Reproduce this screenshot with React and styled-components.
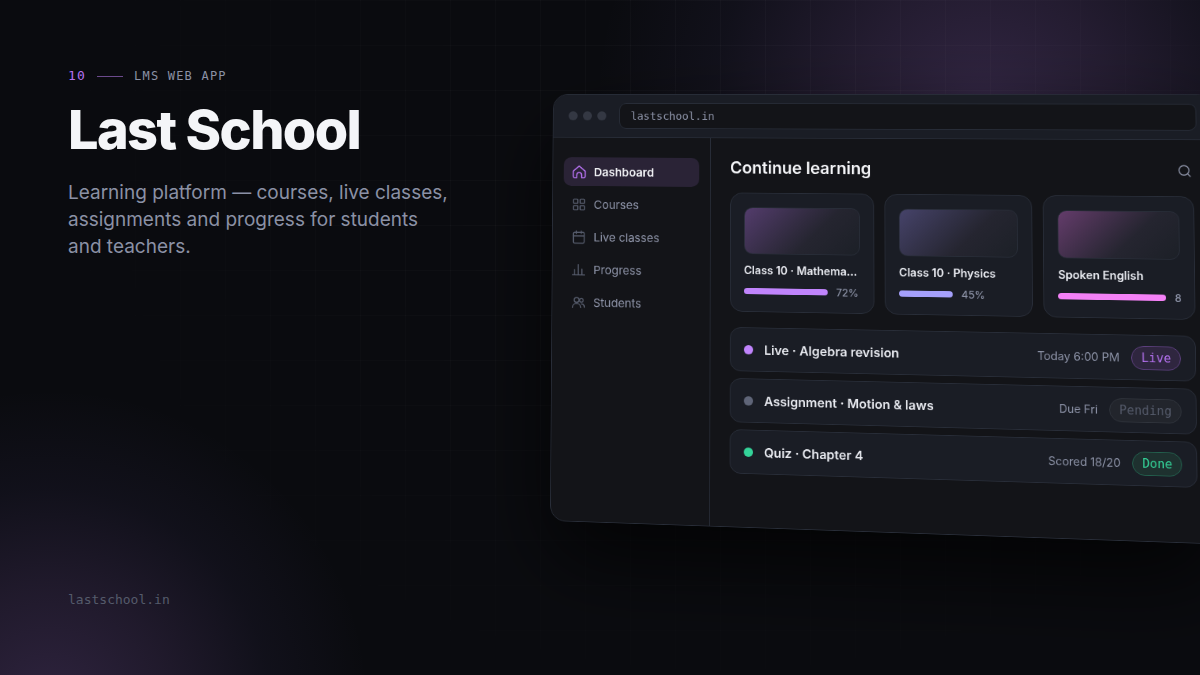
import React from "react";
import styled, { createGlobalStyle } from "styled-components";
import { LayoutGrid, Calendar, Search } from "lucide-react";

const sans = `Inter, "Noto Sans", "Liberation Sans", sans-serif`;
const mono = `"DejaVu Sans Mono", "Liberation Mono", monospace`;

const GlobalStyle = createGlobalStyle`
  *, *::before, *::after { box-sizing: border-box; }
  body { margin: 0; background: #0a0b0f; font-family: ${sans}; }
  h1, h2, h3, p, ul { margin: 0; padding: 0; }
  ul { list-style: none; }
`;

const Page = styled.main`
  position: relative;
  display: grid;
  grid-template-columns: 46.1% minmax(0, 1fr);
  min-height: 100vh;
  overflow: hidden;
  background:
    radial-gradient(circle at 82% 110px, rgba(192, 132, 252, 0.22), rgba(192, 132, 252, 0.14) 130px, rgba(150, 120, 240, 0.05) 270px, transparent 390px),
    radial-gradient(circle at 50px 105%, rgba(192, 132, 252, 0.2), rgba(192, 132, 252, 0.12) 120px, rgba(150, 120, 240, 0.05) 220px, transparent 320px),
    #0a0b0f;
`;

const GridLines = styled.div`
  position: absolute;
  inset: 0;
  background-image:
    linear-gradient(rgba(255, 255, 255, 0.024) 1px, transparent 1px),
    linear-gradient(90deg, rgba(255, 255, 255, 0.024) 1px, transparent 1px);
  background-size: 45px 45px;
  mask-image: radial-gradient(ellipse 60% 84% at 60% 30%, #000 30%, transparent 100%);
`;

const Intro = styled.section`
  position: relative;
  display: flex;
  flex-direction: column;
  padding: 68px 0 67px 68px;
`;

const Eyebrow = styled.p`
  display: flex;
  align-items: center;
  gap: 11px;
  color: #8b91a5;
  font: 400 12px/16px ${mono};
  letter-spacing: 0.1em;
`;

const Index = styled.span`
  color: #b571f0;
  font-size: 13px;
`;

const Rule = styled.span`
  width: 26px;
  height: 1px;
  background: #6b4a8c;
`;

const Title = styled.h1`
  margin-top: 16px;
  color: #f4f5f8;
  font-size: 54px;
  font-weight: 800;
  line-height: 60px;
  letter-spacing: -0.03em;
`;

const Lead = styled.p`
  max-width: 384px;
  margin-top: 19px;
  color: #8b91a5;
  font-size: 19px;
  line-height: 27px;
`;

const SiteLink = styled.a`
  margin-top: auto;
  color: #555b6b;
  font: 400 13px/16px ${mono};
  text-decoration: none;
`;

const Stage = styled.section`
  position: relative;
  padding-top: 94px;
`;

/* The window is drawn flat, then tilted as one plane from its top left corner. */
const Browser = styled.div`
  width: 129.3%;
  min-height: 562px;
  display: flex;
  flex-direction: column;
  border: 1px solid #282d38;
  border-radius: 20px;
  overflow: hidden;
  background: #131418;
  box-shadow: 0 50px 110px rgba(0, 0, 0, 0.75);
  transform-origin: 0 0;
  transform: matrix3d(
    0.75, 0.0004, 0, -0.00006075,
    -0.00525, 0.75, 0, -0.0000225,
    0, 0, 1, 0,
    0, 0, 0, 1
  );
`;

const BrowserBar = styled.header`
  display: flex;
  align-items: center;
  gap: 17px;
  height: 57px;
  padding: 0 20px;
  border-bottom: 1px solid #282d38;
  background: #1a1d25;
`;

const Dots = styled.div`
  display: flex;
  gap: 7px;
`;

const Dot = styled.span`
  flex: none;
  width: 12px;
  height: 12px;
  border-radius: 50%;
  background: ${(p) => p.$color};
`;

const Address = styled.div`
  flex: 1;
  height: 34px;
  padding: 0 14px;
  border: 1px solid #282d38;
  border-radius: 9px;
  background: #131418;
  color: #8b91a5;
  font: 400 14px/32px ${mono};
`;

const BrowserBody = styled.div`
  flex: 1;
  display: grid;
  grid-template-columns: 207px minmax(0, 1fr);
`;

const Sidebar = styled.nav`
  padding: 26px 14px;
  border-right: 1px solid #282d38;
`;

const NavList = styled.ul`
  display: flex;
  flex-direction: column;
  gap: 5px;
`;

const NavLink = styled.a`
  display: flex;
  align-items: center;
  gap: 10px;
  height: 38px;
  padding: 0 11px;
  border-radius: 10px;
  background: ${(p) => (p.$active ? "#2a2336" : "transparent")};
  color: ${(p) => (p.$active ? "#f4f5f8" : "#8b91a5")};
  font-size: 15px;
  font-weight: ${(p) => (p.$active ? 600 : 400)};
  text-decoration: none;

  svg {
    flex: none;
    color: ${(p) => (p.$active ? "#b571f0" : "#555b6b")};
  }
`;

const Content = styled.div`
  padding: 26px 24px 26px 25px;
`;

const ContentHead = styled.div`
  display: flex;
  align-items: center;
  justify-content: space-between;
  height: 26px;
  margin-bottom: 19px;
`;

const Heading = styled.h2`
  color: #f4f5f8;
  font-size: 21px;
  font-weight: 600;
  line-height: 26px;
`;

const IconButton = styled.button`
  display: flex;
  padding: 0 2px;
  border: 0;
  background: none;
  color: #8b91a5;
`;

const Courses = styled.div`
  display: grid;
  grid-template-columns: repeat(3, minmax(0, 1fr));
  gap: 13px;
  margin-bottom: 20px;
`;

const Course = styled.article`
  padding: 18px 17px;
  border: 1px solid #282d38;
  border-radius: 16px;
  background: #1a1d25;
`;

const Thumb = styled.div`
  height: 61px;
  margin-bottom: 12px;
  border: 1px solid #282d38;
  border-radius: 11px;
  background: linear-gradient(135deg, ${(p) => p.$tint}, #252530 60%, #1c2027);
`;

const CourseTitle = styled.h3`
  margin-bottom: 10px;
  overflow: hidden;
  color: #e8eaf0;
  font-size: 14px;
  font-weight: 600;
  line-height: 18px;
  text-overflow: ellipsis;
  white-space: nowrap;
`;

const Progress = styled.div`
  display: flex;
  align-items: center;
  gap: 11px;
  height: 16px;
  color: #8b91a5;
  font-size: 13px;
  font-weight: 500;
  line-height: 16px;
`;

const Bar = styled.span`
  flex: none;
  height: 8px;
  border-radius: 4px;
  background: ${(p) => p.$color};
`;

const Tasks = styled.ul`
  display: flex;
  flex-direction: column;
  gap: 9px;
`;

const Task = styled.li`
  display: flex;
  align-items: center;
  gap: 14px;
  height: 57px;
  padding: 0 17px;
  border: 1px solid #282d38;
  border-radius: 14px;
  background: #1a1d25;
`;

const TaskTitle = styled.span`
  flex: 1;
  color: #e8eaf0;
  font-size: 16px;
  font-weight: 600;
`;

const TaskMeta = styled.span`
  color: #8b91a5;
  font-size: 14px;
`;

const tones = {
  live: ["#b571f0", "#2f263f", "#5d407f"],
  pending: ["#555b6b", "#22252c", "#30343c"],
  done: ["#34d399", "#1e312f", "#23614e"],
};

const Pill = styled.span`
  height: 30px;
  padding: 0 11px;
  border: 1px solid ${(p) => tones[p.$tone][2]};
  border-radius: 15px;
  background: ${(p) => tones[p.$tone][1]};
  color: ${(p) => tones[p.$tone][0]};
  font: 400 15px/28px ${mono};
`;

const stroke = {
  width: 19,
  height: 19,
  viewBox: "0 0 24 24",
  fill: "none",
  stroke: "currentColor",
  strokeWidth: 1.8,
  strokeLinecap: "round",
  strokeLinejoin: "round",
};

const HomeIcon = () => (
  <svg {...stroke} strokeWidth={2}>
    <path d="M2 10.500 12 2l10 8.500V19a2.500 2.500 0 0 1-2.500 2.500H16V17a4 4 0 0 0-8 0v4.500H4.500A2.500 2.500 0 0 1 2 19z" />
  </svg>
);

const ChartIcon = () => (
  <svg {...stroke}>
    <path d="M2 20.500h20M5.500 20.500V12M11.500 20.500V3.500M17.500 20.500V11" />
  </svg>
);

const PeopleIcon = () => (
  <svg {...stroke}>
    <circle cx="9" cy="8" r="4" />
    <circle cx="17" cy="8.500" r="3" />
    <path d="M2 20.500c0-4 3-6.500 7-6.500s7 2.500 7 6.500M17 14.500c3 0 5 2 5 5.500" />
  </svg>
);

const nav = [
  ["Dashboard", <HomeIcon />],
  ["Courses", <LayoutGrid size={19} strokeWidth={1.8} />],
  ["Live classes", <Calendar size={19} strokeWidth={1.8} />],
  ["Progress", <ChartIcon />],
  ["Students", <PeopleIcon />],
];

const courses = [
  { title: "Class 10 · Mathematics", done: 72, label: "72%", color: "#c084fc", tint: "#533c6c" },
  { title: "Class 10 · Physics", done: 45, label: "45%", color: "#a5a0fb", tint: "#46436a" },
  { title: "Spoken English", done: 88, label: "8", color: "#f481f6", tint: "#643c6b" },
];

const tasks = [
  { title: "Live · Algebra revision", meta: "Today 6:00 PM", status: "Live", tone: "live", dot: "#c084fc" },
  { title: "Assignment · Motion & laws", meta: "Due Fri", status: "Pending", tone: "pending", dot: "#5f6578" },
  { title: "Quiz · Chapter 4", meta: "Scored 18/20", status: "Done", tone: "done", dot: "#34d399" },
];

export default function App() {
  return (
    <Page>
      <GlobalStyle />
      <GridLines />
      <Intro>
        <Eyebrow>
          <Index>10</Index>
          <Rule />
          LMS WEB APP
        </Eyebrow>
        <Title>Last School</Title>
        <Lead>
          Learning platform — courses, live classes, assignments and progress for students and
          teachers.
        </Lead>
        <SiteLink href="#site">lastschool.in</SiteLink>
      </Intro>
      <Stage>
        <Browser>
          <BrowserBar>
            <Dots>
              <Dot $color="#343843" />
              <Dot $color="#343843" />
              <Dot $color="#343843" />
            </Dots>
            <Address>lastschool.in</Address>
          </BrowserBar>
          <BrowserBody>
            <Sidebar aria-label="Main">
              <NavList>
                {nav.map(([label, icon], i) => (
                  <li key={label}>
                    <NavLink href={`#${label}`} $active={i === 0}>
                      {icon}
                      {label}
                    </NavLink>
                  </li>
                ))}
              </NavList>
            </Sidebar>
            <Content>
              <ContentHead>
                <Heading>Continue learning</Heading>
                <IconButton type="button" aria-label="Search">
                  <Search size={18} strokeWidth={1.8} />
                </IconButton>
              </ContentHead>
              <Courses>
                {courses.map((c) => (
                  <Course key={c.title}>
                    <Thumb $tint={c.tint} />
                    <CourseTitle>{c.title}</CourseTitle>
                    <Progress>
                      <Bar $color={c.color} style={{ width: `${c.done}%` }} />
                      {c.label}
                    </Progress>
                  </Course>
                ))}
              </Courses>
              <Tasks>
                {tasks.map((t) => (
                  <Task key={t.title}>
                    <Dot $color={t.dot} />
                    <TaskTitle>{t.title}</TaskTitle>
                    <TaskMeta>{t.meta}</TaskMeta>
                    <Pill $tone={t.tone}>{t.status}</Pill>
                  </Task>
                ))}
              </Tasks>
            </Content>
          </BrowserBody>
        </Browser>
      </Stage>
    </Page>
  );
}
